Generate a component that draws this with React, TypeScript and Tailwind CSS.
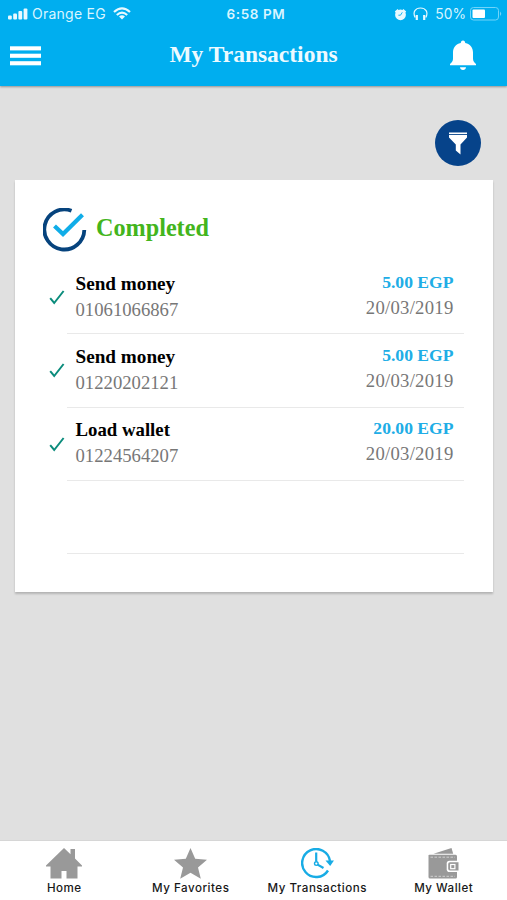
import React from 'react';

interface Transaction {
  title: string;
  titleClass: string;
  phone: string;
  amount: string;
  date: string;
}

const transactions: Transaction[] = [
  {
    title: 'Send money',
    titleClass: 'text-[19.2px]',
    phone: '01061066867',
    amount: '5.00 EGP',
    date: '20/03/2019',
  },
  {
    title: 'Send money',
    titleClass: 'text-[19.2px]',
    phone: '01220202121',
    amount: '5.00 EGP',
    date: '20/03/2019',
  },
  {
    title: 'Load wallet',
    titleClass: 'text-[18.8px]',
    phone: '01224564207',
    amount: '20.00 EGP',
    date: '20/03/2019',
  },
];

const StatusBar: React.FC = () => (
  <div className="grid h-7 grid-cols-[1fr_auto_1fr] items-center pl-2 pr-[5px] text-[13px] text-[#d9f5ff]">
    <div className="flex items-center">
      <svg width="20" height="12" viewBox="0 0 20 12" fill="#e8f9ff">
        <rect x="0" y="7.5" width="3.8" height="4" rx="1" />
        <rect x="5.2" y="5.5" width="3.8" height="6" rx="1" />
        <rect x="10.4" y="3" width="3.8" height="8.5" rx="1" />
        <rect x="15.6" y="0.5" width="3.8" height="11" rx="1" />
      </svg>
      <span className="-mt-0.5 ml-1 text-[14px] tracking-[0.25px]">Orange EG</span>
      <svg className="-mt-0.5 ml-[7px]" width="18" height="13" viewBox="0 0 18 13" fill="none" stroke="#e8f9ff">
        <path d="M1 5 Q9 -2.2 17 5" strokeWidth="2.2" />
        <path d="M3.8 8 Q9 3.3 14.2 8" strokeWidth="2.1" />
        <path d="M9 12.5 L6 9.5 Q9 7.2 12 9.5 Z" fill="#e8f9ff" stroke="none" />
      </svg>
    </div>
    <span className="pl-0.5 text-[13.5px] font-semibold tracking-[0.6px]">6:58 PM</span>
    <div className="flex items-center justify-end">
      <svg width="13" height="13" viewBox="0 0 13 13" fill="#e8f9ff">
        <circle cx="6.5" cy="6.8" r="5.4" />
        <path d="M0.8 3.6 L3.6 0.9 L5 2.4 L2 5 Z M12.2 3.6 L9.4 0.9 L8 2.4 L11 5 Z" />
        <path d="M8.3 4.3 L6.5 7.2 H4.4" fill="none" stroke="#00aeef" strokeWidth="0.9" />
      </svg>
      <svg className="ml-1.5" width="15" height="14" viewBox="0 0 15 14" fill="none" stroke="#e8f9ff">
        <path d="M2.2 10.5 C-0.7 5 2.5 1 7.5 1 S15.7 5 12.8 10.5" strokeWidth="1.2" />
        <path d="M3.8 8 V13 M11.2 8 V13" strokeWidth="2.2" />
      </svg>
      <span className="ml-[7px] text-[13.8px]">50%</span>
      <svg className="ml-1" width="32" height="14" viewBox="0 0 32 14">
        <rect x="0.5" y="0.5" width="28" height="12.5" rx="3" fill="none" stroke="#71d4fa" />
        <rect x="2.5" y="2.5" width="12.5" height="8.5" rx="1" fill="#fff" />
        <path d="M30 4.5 Q32.5 6.8 30 9 Z" fill="#71d4fa" />
      </svg>
    </div>
  </div>
);

const MenuIcon: React.FC = () => (
  <svg width="31" height="20" viewBox="0 0 31 20" fill="#fff">
    <rect y="0.3" width="31" height="4.1" />
    <rect y="7.7" width="31" height="4.1" />
    <rect y="15.2" width="31" height="4.1" />
  </svg>
);

const BellIcon: React.FC = () => (
  <svg width="28" height="31" viewBox="0 0 28 31" fill="#fff">
    <path d="M14 0.5 C15.4 0.5 16.2 1.5 16.2 3 C21.5 4 24 8 24 12.5 V18.5 C24 21 25 22.4 27 24 V25.3 H1 V24 C3 22.4 4 21 4 18.5 V12.5 C4 8 6.5 4 11.8 3 C11.8 1.5 12.6 0.5 14 0.5 Z" />
    <path d="M11 27.3 H17 Q16.6 30 14 30 Q11.4 30 11 27.3 Z" />
  </svg>
);

const HomeIcon: React.FC = () => (
  <svg width="36" height="31" viewBox="0 0 36 31" fill="#999">
    <path d="M18 0 L24.5 6.2 V1 H29 V10.5 L36 17.5 V18.5 H31.5 V30.5 H20.5 V23 H15.5 V30.5 H4.5 V18.5 H0 V17.5 Z" />
  </svg>
);

const StarIcon: React.FC = () => (
  <svg width="33" height="31" viewBox="0 0 33 31" fill="#999">
    <path d="M16.5 0 L21.2 10.8 L33 11.8 L24 19.5 L26.8 30.8 L16.5 24.8 L6.2 30.8 L9 19.5 L0 11.8 L11.8 10.8 Z" />
  </svg>
);

const ClockIcon: React.FC = () => (
  <svg width="33" height="31" viewBox="0 0 33 31" fill="none" stroke="#18ace5">
    <path d="M29 13 A14 14 0 1 0 27 22.5" strokeWidth="2.4" />
    <path d="M24.5 12.5 H33 L29.2 18 Z" fill="#18ace5" stroke="none" />
    <path d="M15.2 4.5 V13.6 M16.6 16.6 L22.5 20" strokeWidth="2.2" />
    <circle cx="15.3" cy="15.6" r="1.8" strokeWidth="1.4" />
  </svg>
);

const WalletIcon: React.FC = () => (
  <svg width="31" height="31" viewBox="0 0 31 31">
    <path d="M5.5 5.7 L23.5 0 L25.2 5.7 Z" fill="#999" />
    <path d="M0.5 7.5 Q0.5 6.8 1.5 6.8 H27.5 Q29 6.8 29 8.3 V29 Q29 30.5 27.5 30.5 H2 Q0.5 30.5 0.5 29 Z" fill="#999" />
    <path d="M2.5 9.2 H27 M2.5 28.3 H27" fill="none" stroke="#ddd" strokeWidth="0.8" strokeDasharray="2.5 1.5" />
    <path d="M31 12.8 H21.5 Q18.7 12.8 18.7 15.6 V21.2 Q18.7 24 21.5 24 H31 Z" fill="#fff" />
    <path d="M30.5 14.2 H22 Q20.2 14.2 20.2 16 V20.8 Q20.2 22.6 22 22.6 H30.5 Z" fill="#999" />
    <rect x="22.7" y="16.5" width="4.2" height="4.2" fill="none" stroke="#fff" strokeWidth="1.2" />
  </svg>
);

const navItems = [
  { label: 'Home', icon: <HomeIcon /> },
  { label: 'My Favorites', icon: <StarIcon /> },
  { label: 'My Transactions', icon: <ClockIcon /> },
  { label: 'My Wallet', icon: <WalletIcon /> },
];

const TransactionRow: React.FC<{ transaction: Transaction }> = ({ transaction }) => (
  <li className="flex h-[73.3px]">
    <div className="w-[18px] shrink-0 pt-[29px]">
      <svg width="16" height="16" viewBox="0 0 16 16" fill="none" stroke="#0b8c7c" strokeWidth="2">
        <path d="M1.2 8.2 L5.2 13 L14.6 1" />
      </svg>
    </div>
    <div className="flex flex-1 justify-between border-b border-[#e9e9e9] pl-[8.5px] pr-[10.5px] leading-[26px]">
      <div className="pt-[9.5px]">
        <p className={`font-bold text-black ${transaction.titleClass}`}>{transaction.title}</p>
        <p className="text-[18.7px] text-[#777]">{transaction.phone}</p>
      </div>
      <div className="pt-[7.6px] text-right">
        <p className="text-[17.6px] font-bold text-[#20ade6]">{transaction.amount}</p>
        <p className="text-[18.7px] tracking-[0.25px] text-[#777]">{transaction.date}</p>
      </div>
    </div>
  </li>
);

const App: React.FC = () => {
  return (
    <div className="flex h-screen flex-col bg-[#e0e0e0] font-['Liberation_Serif',serif]">
      <header className="h-[86px] shrink-0 bg-[#00aeef] shadow-[0_1px_2px_rgba(0,0,0,0.35)]">
        <div className="font-[Inter,sans-serif]">
          <StatusBar />
        </div>
        <div className="grid h-[54px] grid-cols-[1fr_auto_1fr] items-center pl-2.5 pr-[30px]">
          <button className="pt-0.5" aria-label="Menu">
            <MenuIcon />
          </button>
          <h1 className="pl-[20px] text-[23.5px] font-bold text-[#edfaff]">My Transactions</h1>
          <button className="justify-self-end" aria-label="Notifications">
            <BellIcon />
          </button>
        </div>
      </header>

      <main className="flex-1 pl-[15px] pr-3.5">
        <div className="flex h-[94px] items-end justify-end pb-[14px] pr-3">
          <button className="flex size-[46px] items-center justify-center rounded-full bg-[#06438a]" aria-label="Filter">
            <svg width="18" height="23" viewBox="0 0 18 23" fill="#fff">
              <rect x="0" y="0.5" width="18" height="1.6" />
              <path d="M0 3 H18 V5.5 L11.5 12.5 V22.5 L6.8 18.5 V12.5 L0 5.5 Z" />
            </svg>
          </button>
        </div>

        <section className="h-[412px] bg-white pl-[34px] pr-[29px] shadow-[0_2px_2px_rgba(0,0,0,0.2)]">
          <div className="-ml-1.5 flex h-[81px] items-center pt-[18px]">
            <svg width="44" height="44" viewBox="0 0 44 44" fill="none">
              <path d="M28.5 2.8 A20 20 0 1 0 41.3 22" stroke="#06437d" strokeWidth="3.8" />
              <path d="M11.5 18 L20 26 L39.5 6.8" stroke="#10ade8" strokeWidth="4.2" />
            </svg>
            <h2 className="-mt-0.5 ml-[9px] text-[24.2px] font-bold text-[#43b51c]">Completed</h2>
          </div>
          <ul>
            {transactions.map((transaction, index) => (
              <TransactionRow key={index} transaction={transaction} />
            ))}
            <li className="ml-[18px] h-[73.3px] border-b border-[#e9e9e9]" />
          </ul>
        </section>
      </main>

      <nav className="grid h-[60px] shrink-0 grid-cols-4 border-t border-[#d6d6d6] bg-white pl-px font-[Inter,sans-serif]">
        {navItems.map((item) => (
          <a key={item.label} className="flex flex-col items-center pt-[7px]">
            {item.icon}
            <span className="mt-0.5 whitespace-nowrap text-[11.6px] font-medium leading-[15px] tracking-[0.5px] text-[#181818]">
              {item.label}
            </span>
          </a>
        ))}
      </nav>
    </div>
  );
};

export default App;
